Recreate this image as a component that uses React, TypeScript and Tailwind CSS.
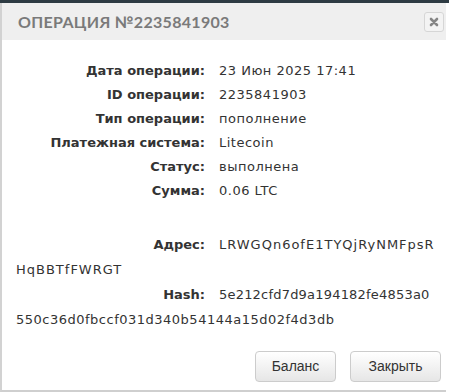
import React from "react";

const rows: [string, string][] = [
  ["Дата операции:", "23 Июн 2025 17:41"],
  ["ID операции:", "2235841903"],
  ["Тип операции:", "пополнение"],
  ["Платежная система:", "Litecoin"],
  ["Статус:", "выполнена"],
  ["Сумма:", "0.06 LTC"],
];

function Label({ children }: { children: React.ReactNode }) {
  return (
    <span className="inline-block w-[189px] text-right font-bold text-[#333] mr-[14px] tracking-normal">
      {children}
    </span>
  );
}

export default function App() {
  return (
    <div className="w-[449px] h-[392px] bg-white overflow-hidden flex flex-col" style={{ fontFamily: '"DejaVu Sans", sans-serif' }}>
      <div className="h-[3px] bg-[#2e3b43] shrink-0" />
      <div className="flex-1 flex flex-col border-l-2 border-[#d2d2d2] border-b-2 border-b-[#cfcfcf] mr-[3px]">
        <div className="h-[37px] bg-[#efefef] flex items-center justify-between pl-[16px] pr-[2px] shrink-0">
          <span className="text-[16px] font-bold text-[#7a7a7a] tracking-[0.3px]" style={{ fontFamily: "Lato, sans-serif" }}>
            ОПЕРАЦИЯ №2235841903
          </span>
          <div className="w-[20px] h-[20px] border border-[#d6d6d6] rounded-[3px] flex items-center justify-center bg-[#f3f3f3]">
            <svg width="10" height="10" viewBox="0 0 10 10">
              <path d="M2 2 L8 8 M8 2 L2 8" stroke="#858585" strokeWidth="2.6" strokeLinecap="round" />
            </svg>
          </div>
        </div>
        <div className="pl-[14px] pt-[19px] text-[13px] text-[#333]">
          {rows.map(([l, v]) => (
            <div key={l} className="leading-[24px] whitespace-nowrap">
              <Label>{l}</Label>
              <span className="tracking-[0.5px]">{v}</span>
            </div>
          ))}
          <div className="h-[29px]" />
          <div className="leading-[25px] whitespace-nowrap">
            <div>
              <Label>Адрес:</Label>
              <span className="tracking-[1px]">LRWGQn6ofE1TYQjRyNMFpsR</span>
            </div>
            <div className="tracking-[1px]">HqBBTfFWRGT</div>
            <div>
              <Label>Hash:</Label>
              <span className="tracking-[0.2px]">5e212cfd7d9a194182fe4853a0</span>
            </div>
            <div className="tracking-[0.5px]">550c36d0fbccf031d340b54144a15d02f4d3db</div>
          </div>
        </div>
        <div className="flex-1" />
        <div className="flex justify-end gap-[14px] pr-[5px] pb-[8px]" style={{ fontFamily: '"Liberation Sans", Arial, sans-serif' }}>
          <button className="w-[81px] h-[31px] rounded-[4px] border border-[#cccccc] bg-gradient-to-b from-white to-[#e6e6e6] text-[14px] text-[#333]">
            Баланс
          </button>
          <button className="w-[91px] h-[31px] rounded-[4px] border border-[#cccccc] bg-gradient-to-b from-white to-[#e6e6e6] text-[14px] text-[#333]">
            Закрыть
          </button>
        </div>
      </div>
    </div>
  );
}
